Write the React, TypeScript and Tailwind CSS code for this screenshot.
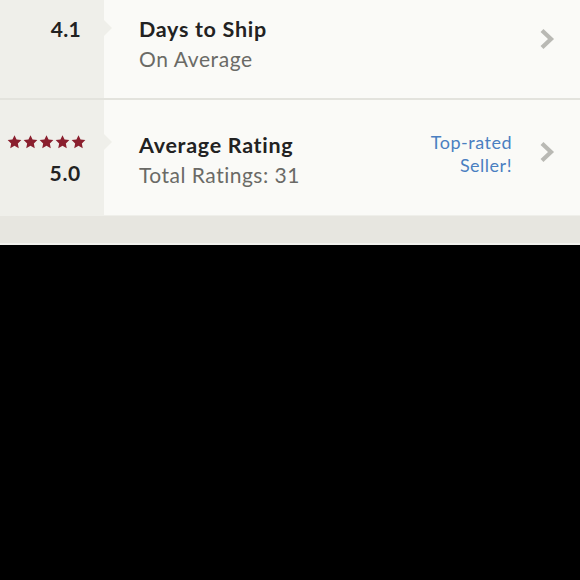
import React from "react";

function Star() {
  return (
    <svg width="15" height="14" viewBox="0 0 24 23" className="block">
      <path
        d="M12 0.3l3.4 7.2 7.9 0.9-5.8 5.4 1.5 7.9L12 17.8l-7 3.9 1.5-7.9L0.7 8.4l7.9-0.9z"
        fill="#8a1f2e"
      />
    </svg>
  );
}

function Chevron() {
  return (
    <svg width="16" height="22" viewBox="0 0 16 22" className="block">
      <path d="M3 2.5l9 8.5-9 8.5" fill="none" stroke="#b9b9b4" strokeWidth="4.2" strokeLinejoin="miter" />
    </svg>
  );
}

function Notch() {
  return (
    <div className="absolute left-0 top-[34px] h-0 w-0 border-y-[8px] border-l-[8px] border-y-transparent border-l-[#efefea]" />
  );
}

export default function App() {
  const font = { fontFamily: "Lato, 'Open Sans', sans-serif" };
  return (
    <div className="h-[580px] w-[580px] overflow-hidden bg-black" style={font}>
      <div className="-mt-[14px] bg-[#fafaf7]">
        {/* Row 1 */}
        <div className="flex h-[114px] border-b-2 border-[#e3e3dd]">
          <div className="w-[104px] shrink-0 bg-[#efefea] pr-[23px] pt-[28px] text-right text-[21px] font-bold leading-[30px] tracking-[0.3px] text-[#222]">
            4.1
          </div>
          <div className="relative flex flex-1 items-start pl-[35px] pr-[25px]">
            <Notch />
            <div className="flex-1 pt-[28px]">
              <div className="text-[21.5px] font-bold leading-[30px] tracking-[0.7px] text-[#222]">Days to Ship</div>
              <div className="text-[21px] leading-[30px] tracking-[0.6px] text-[#6a6a66]">On Average</div>
            </div>
            <div className="pt-[42px]">
              <Chevron />
            </div>
          </div>
        </div>
        {/* Row 2 */}
        <div className="flex h-[115px]">
          <div className="flex w-[104px] shrink-0 flex-col items-end bg-[#efefea] pr-[18px] pt-[35px]">
            <div className="flex gap-[1px]">
              <Star />
              <Star />
              <Star />
              <Star />
              <Star />
            </div>
            <div className="mt-[9px] pr-[5px] text-[21px] font-bold leading-[30px] tracking-[0.7px] text-[#222]">5.0</div>
          </div>
          <div className="relative flex flex-1 items-start pl-[35px] pr-[25px]">
            <Notch />
            <div className="flex-1 pt-[30px]">
              <div className="text-[21.5px] font-bold leading-[30px] tracking-[0.7px] text-[#222]">Average Rating</div>
              <div className="text-[21px] leading-[30px] tracking-[0.5px] text-[#6a6a66]">Total Ratings: 31</div>
            </div>
            <div className="pr-[27px] pt-[31px] text-right text-[18px] leading-[23px] tracking-[0.5px] text-[#4a7fc1]">
              Top-rated
              <br />
              Seller!
            </div>
            <div className="pt-[41px]">
              <Chevron />
            </div>
          </div>
        </div>
      </div>
      <div className="h-[30px] border-t border-[#efefea] border-b-2 border-b-[#f2f2ee] bg-[#e7e6e0]" />
    </div>
  );
}
